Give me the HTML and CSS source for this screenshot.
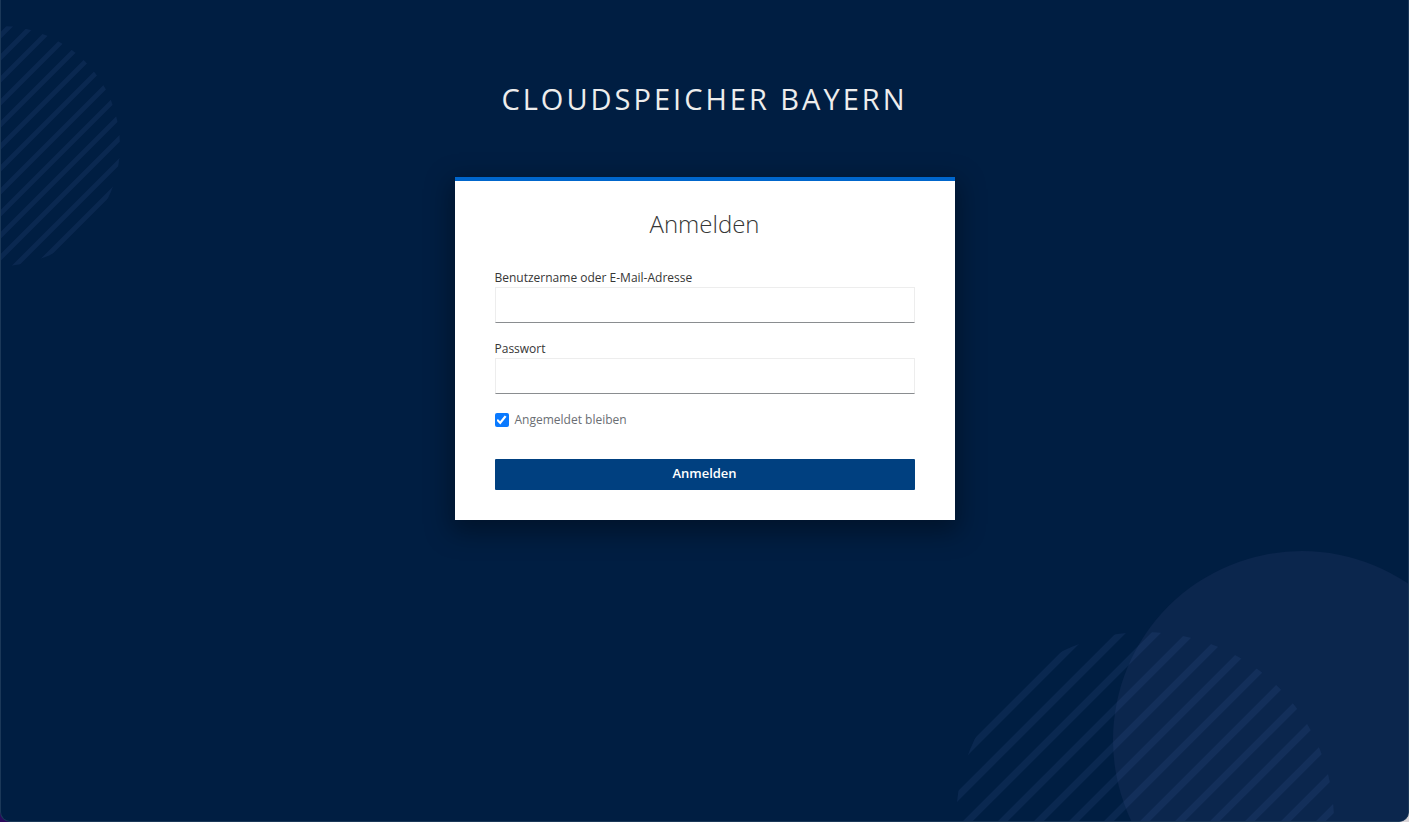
FILE: index.html
```html
<!DOCTYPE html>
<html lang="de">
<head>
<meta charset="utf-8">
<meta name="viewport" content="width=device-width, initial-scale=1">
<title>Cloudspeicher Bayern</title>
<link rel="stylesheet" href="styles.css">
</head>
<body>
<div class="page">
  <svg class="decor decor-left" viewBox="0 0 120 240" aria-hidden="true">
    <clipPath id="clip-left"><circle cx="-1" cy="120" r="120"/></clipPath>
    <path clip-path="url(#clip-left)" stroke-width="5" d="M-140 149l240-240M-140 171l280-280M-140 193l280-280M-140 216l280-280M-140 238l280-280M-140 260l280-280M-140 282l280-280M-140 305l280-280M-140 327l280-280M-140 349l280-280M-140 371l280-280M-140 394l280-280M-140 416l280-280"/>
  </svg>
  <svg class="decor decor-right" viewBox="0 0 453 272" aria-hidden="true">
    <clipPath id="clip-right"><circle cx="190" cy="272" r="189"/></clipPath>
    <circle class="disc" cx="347" cy="191" r="189"/>
    <path clip-path="url(#clip-right)" stroke-width="7" d="M-100 314l500-500M-100 350l500-500M-100 385l500-500M-100 420l500-500M-100 456l500-500M-100 491l500-500M-100 526l500-500M-100 562l500-500M-100 597l500-500M-100 632l500-500M-100 667l500-500M-100 703l500-500M-100 738l500-500"/>
  </svg>
  <header class="brand">Cloudspeicher Bayern</header>
  <main class="card">
    <h1 class="card-title">Anmelden</h1>
    <form class="form">
      <div class="field">
        <label for="username">Benutzername oder E-Mail-Adresse</label>
        <input id="username" type="text" autocomplete="username">
      </div>
      <div class="field">
        <label for="password">Passwort</label>
        <input id="password" type="password" autocomplete="current-password">
      </div>
      <label class="remember"><input type="checkbox" checked>Angemeldet bleiben</label>
      <button class="submit" type="submit">Anmelden</button>
    </form>
  </main>
</div>
</body>
</html>
```
FILE: styles.css
```css
* { box-sizing: border-box; }

body {
  margin: 0;
  background: linear-gradient(90deg, #2a0a5c 50%, #d8d4d8 50%);
  font-family: "Open Sans", sans-serif;
  font-size: 12px;
  line-height: 18px;
  color: #363636;
}

.page {
  position: relative;
  display: flex;
  flex-direction: column;
  align-items: center;
  min-height: 100vh;
  padding: 76px 20px 40px;
  overflow: hidden;
  background: #001e42;
  border: 1px solid #1b3858;
  border-top: 0;
  border-radius: 0 0 10px 10px;
}

.decor {
  position: absolute;
  fill: none;
  stroke: #4a6bb0;
  stroke-opacity: 0.13;
}
.decor-left { left: 0; top: 26px; width: 120px; }
.decor-right { right: 0; bottom: 0; width: 453px; }
.disc { fill: #0b264d; stroke: none; }

.brand {
  position: relative;
  color: #ededed;
  font-size: 29px;
  line-height: 45px;
  letter-spacing: 3px;
  text-transform: uppercase;
  text-align: center;
}

.card {
  position: relative;
  width: 100%;
  max-width: 500px;
  margin-top: 56px;
  padding: 30px 40px;
  background: #fff;
  border-top: 4px solid #0066cc;
  box-shadow: 0 8px 24px 4px rgba(3, 3, 3, 0.35);
}

.card-title {
  margin: 0 0 32px;
  font-size: 24px;
  line-height: 26px;
  font-weight: 300;
  text-align: center;
}

.form { display: flex; flex-direction: column; }

.field {
  display: flex;
  flex-direction: column;
  margin-bottom: 17px;
}

.field input {
  width: 100%;
  height: 36px;
  padding: 5px 8px;
  border: 1px solid #ededed;
  border-bottom-color: #8a8d90;
  border-radius: 0;
  background: #fff;
  font: inherit;
}

.remember {
  display: flex;
  align-items: center;
  gap: 6px;
  color: #6a6e73;
}

.remember input {
  appearance: none;
  width: 14px;
  height: 14px;
  margin: 0;
  border-radius: 2px;
  background: #0a7aff;
  display: grid;
  place-items: center;
}

.remember input:not(:checked) {
  border: 1px solid #8a8d90;
  background: #fff;
}

.remember input:checked::before {
  content: "";
  width: 10px;
  height: 10px;
  background: #fff;
  clip-path: polygon(0 54%, 14% 40%, 36% 62%, 82% 4%, 100% 18%, 38% 94%);
}

.submit {
  height: 31px;
  margin-top: 30px;
  padding: 0 10px 4px;
  border: 0;
  border-radius: 1px;
  background: #004080;
  color: #fff;
  font: 600 13px/20px "Open Sans", sans-serif;
}
```
